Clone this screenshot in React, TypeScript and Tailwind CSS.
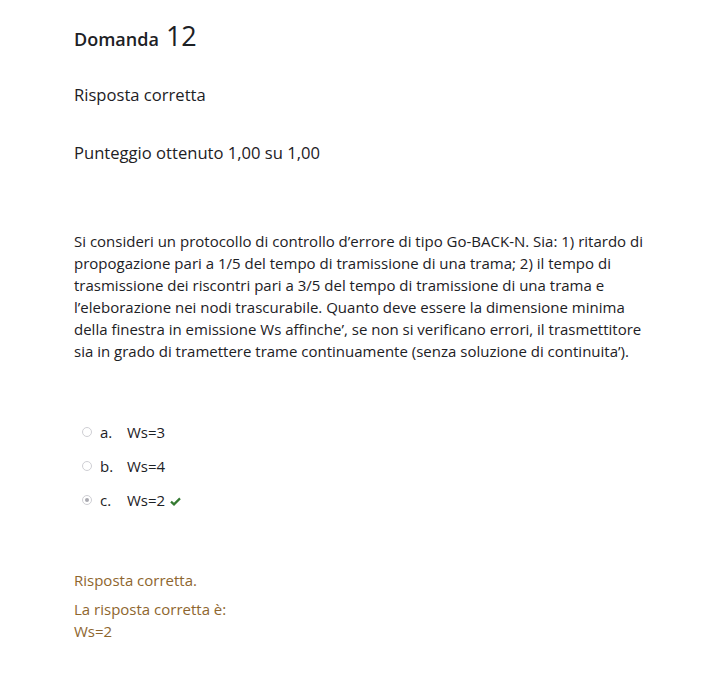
import React from 'react';

const options = [
  { letter: 'a.', text: 'Ws=3', checked: false, correct: false },
  { letter: 'b.', text: 'Ws=4', checked: false, correct: false },
  { letter: 'c.', text: 'Ws=2', checked: true, correct: true },
];

const questionLines = [
  'Si consideri un protocollo di controllo d’errore di tipo Go-BACK-N. Sia: 1) ritardo di',
  'propogazione pari a 1/5 del tempo di tramissione di una trama; 2) il tempo di',
  'trasmissione dei riscontri pari a 3/5 del tempo di tramissione di una trama e',
  'l’eleborazione nei nodi trascurabile. Quanto deve essere la dimensione minima',
  'della finestra in emissione Ws affinche’, se non si verificano errori, il trasmettitore',
  'sia in grado di tramettere trame continuamente (senza soluzione di continuita’).',
];

export default function App() {
  return (
    <div
      className="min-h-[673px] bg-white pl-[74px] pr-[20px] pt-[18px] text-[15px] leading-[22px] text-[#1d2125]"
      style={{ fontFamily: '"Open Sans", "Noto Sans", sans-serif' }}
    >
      {/* intestazione domanda */}
      <h2 className="flex items-baseline gap-[7px] leading-[36px]">
        <span className="text-[18px] font-semibold">Domanda</span>
        <span className="text-[27px] font-normal">12</span>
      </h2>

      <div className="mt-[27px] text-[16.6px]">Risposta corretta</div>
      <div className="mt-[36px] text-[16.6px]">Punteggio ottenuto 1,00 su 1,00</div>

      {/* testo della domanda */}
      <p className="mt-[66px] whitespace-nowrap">
        {questionLines.map((line, i) => (
          <span key={i} className="block">
            {line}
          </span>
        ))}
      </p>

      {/* risposte */}
      <div className="mt-[59px] flex flex-col gap-[12px] pl-[8px]">
        {options.map((o) => (
          <div key={o.letter} className="flex items-center">
            <span className="flex h-[10px] w-[10px] items-center justify-center rounded-full border border-[#cfcfd4] bg-white">
              {o.checked && <span className="h-[4px] w-[4px] rounded-full bg-[#a9a9b0]" />}
            </span>
            <span className="ml-[8px] w-[27px]">{o.letter}</span>
            <span>{o.text}</span>
            {o.correct && (
              <svg className="ml-[5px] mt-[3px]" width="11" height="9" viewBox="0 0 11 9">
                <path d="M1 4.6 L4 7.4 L10 1.4" fill="none" stroke="#357a32" strokeWidth="2.2" />
              </svg>
            )}
          </div>
        ))}
      </div>

      {/* feedback */}
      <div className="mt-[58px] text-[#8e662e]">
        <div>Risposta corretta.</div>
        <div className="mt-[7px]">La risposta corretta è:</div>
        <div>Ws=2</div>
      </div>
    </div>
  );
}
